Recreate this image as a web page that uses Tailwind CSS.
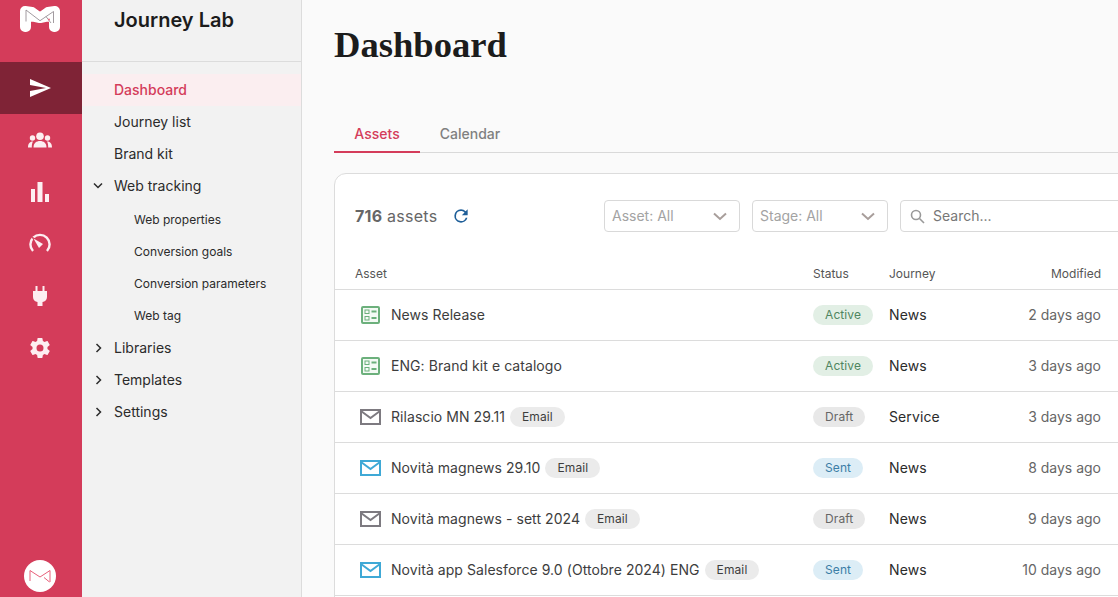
<!doctype html>
<html><head><meta charset="utf-8"><script src="https://cdn.jsdelivr.net/npm/@tailwindcss/browser@4"></script></head>
<body class="m-0 overflow-hidden">
<div class="flex h-[597px] w-[1118px] overflow-hidden font-['Inter',sans-serif] text-[14px] text-[#3d3d3d] bg-[#fafafa]">
  <!-- rail -->
  <aside class="w-[82px] shrink-0 bg-[#d43c5a] flex flex-col items-stretch">
    <div class="h-[62px] flex justify-center pt-[6px] pr-[2px]">
      <svg width="40" height="28" viewBox="0 0 40 28"><path d="M5 5 L12 6 L20 11.7 L28 6 L35 5 V21 H34 V9 L20 12 L6 9 V21 H5Z" fill="#fff" stroke="#fff" stroke-width="10" stroke-linejoin="round"/><path d="M6 15.5 V4 L20 14.7 L33.5 5.5 V17 M26 10.5 L31 17" fill="none" stroke="#8a8288" stroke-width=".8"/><circle cx="29" cy="13.5" r=".9" fill="#e8607a"/></svg>
    </div>
    <div class="h-[52px] bg-[#7f2336] flex items-center justify-center pr-[2px]">
      <svg width="24" height="20" viewBox="0 0 24 20"><path d="M2 1 L23 10 L2 19 V13 L18 10 L2 7Z" fill="#fff"/></svg>
    </div>
    <div class="h-[52px] flex items-center justify-center pr-[2px]">
      <svg width="24" height="16" viewBox="0 0 24 16" fill="#fdeef1"><circle cx="12" cy="4.2" r="3.8"/><circle cx="4.5" cy="6" r="2.7"/><circle cx="19.5" cy="6" r="2.7"/><path d="M5.5 15.5 C5.5 11 8.5 9 12 9 S18.5 11 18.5 15.5Z"/><path d="M0 15.5 C0 12 1.5 9.5 5 9.5 C4 11 3.8 13 3.8 15.5Z"/><path d="M24 15.5 C24 12 22.5 9.5 19 9.5 C20 11 20.2 13 20.2 15.5Z"/></svg>
    </div>
    <div class="h-[52px] flex items-center justify-center pr-[2px]">
      <svg width="18" height="20" viewBox="0 0 18 20" fill="#fdeef1"><rect x="0" y="7" width="4" height="13"/><rect x="6.5" y="0" width="5" height="20"/><rect x="14" y="12" width="4" height="8"/></svg>
    </div>
    <div class="h-[52px] flex items-center justify-center pr-[2px]">
      <svg width="22" height="22" viewBox="0 0 22 22" fill="none"><path d="M4 18 A9.6 9.6 0 1 1 18 18" stroke="#fdeef1" stroke-width="2.4"/><path d="M2 3 L16 11 L10 17Z" fill="#d43c5a"/><path d="M4.5 5.5 L14 11 L10 15Z" fill="#fdeef1"/></svg>
    </div>
    <div class="h-[52px] flex items-center justify-center pr-[2px]">
      <svg width="14" height="20" viewBox="0 0 14 20" fill="#fdeef1"><rect x="2.5" y="0" width="2" height="6"/><rect x="9.5" y="0" width="2" height="6"/><path d="M0 5 H14 V11 C14 14 12 15.5 9.5 16 V20 H4.5 V16 C2 15.5 0 14 0 11Z"/></svg>
    </div>
    <div class="h-[52px] flex items-center justify-center pr-[2px]">
      <svg width="24" height="24" viewBox="0 0 24 24" fill="#fdeef1"><path d="M19.43 12.98c.04-.32.07-.64.07-.98s-.03-.66-.07-.98l2.11-1.65c.19-.15.24-.42.12-.64l-2-3.46c-.12-.22-.39-.3-.61-.22l-2.49 1c-.52-.4-1.08-.73-1.69-.98l-.38-2.65A.49.49 0 0 0 14 2h-4c-.25 0-.46.18-.49.42l-.38 2.65c-.61.25-1.17.59-1.69.98l-2.49-1c-.23-.09-.49 0-.61.22l-2 3.46c-.13.22-.07.49.12.64l2.11 1.65c-.04.32-.07.65-.07.98s.03.66.07.98l-2.11 1.65c-.19.15-.24.42-.12.64l2 3.46c.12.22.39.3.61.22l2.49-1c.52.4 1.08.73 1.69.98l.38 2.65c.03.24.24.42.49.42h4c.25 0 .46-.18.49-.42l.38-2.65c.61-.25 1.17-.59 1.69-.98l2.49 1c.23.09.49 0 .61-.22l2-3.46c.12-.22.07-.49-.12-.64l-2.11-1.65zM12 15.5a3.5 3.5 0 1 1 0-7 3.5 3.5 0 0 1 0 7z"/></svg>
    </div>
    <div class="mt-auto flex justify-center pb-[5px] pr-[2px]">
      <div class="w-[32px] h-[32px] rounded-full bg-white flex items-center justify-center">
        <svg width="22" height="15" viewBox="0 0 22 15" fill="none" stroke="#e8607a" stroke-width="1"><path d="M1 12 V1.5 L11 8 L21 1.5 V13 M15 8.5 L20.5 13"/></svg>
      </div>
    </div>
  </aside>
  <!-- sidebar -->
  <nav class="w-[220px] shrink-0 bg-[#f2f2f2] border-r border-[#dcdcdc] text-[#2b2b2b]">
    <div class="h-[62px] border-b border-[#dcdcdc] pl-[32px] pt-[6px] text-[20px] leading-[28px] font-semibold text-[#1c1c1c]">Journey Lab</div>
    <div class="pt-[12px]">
      <div class="h-[32px] pl-[32px] pb-[2px] flex items-center bg-[#fbeef0] text-[#d43c5a] font-medium">Dashboard</div>
      <div class="h-[32px] pl-[32px] pb-[2px] flex items-center">Journey list</div>
      <div class="h-[32px] pl-[32px] pb-[2px] flex items-center">Brand kit</div>
      <div class="h-[32px] flex items-center relative pl-[32px] pb-[2px]"><svg class="absolute left-[11px] top-[12px]" width="10" height="8" viewBox="0 0 10 8" fill="none" stroke="#2b2b2b" stroke-width="1.5"><path d="M1 1.5 L5 5.5 L9 1.5"/></svg>Web tracking</div>
      <div class="mt-[2px] h-[32px] pl-[52px] flex items-center text-[12px]">Web properties</div>
      <div class="h-[32px] pl-[52px] flex items-center text-[12px]">Conversion goals</div>
      <div class="h-[32px] pl-[52px] flex items-center text-[12px]">Conversion parameters</div>
      <div class="h-[32px] pl-[52px] flex items-center text-[12px]">Web tag</div>
      <div class="h-[32px] flex items-center relative pl-[32px] pb-[2px]"><svg class="absolute left-[13px] top-[11px]" width="8" height="10" viewBox="0 0 8 10" fill="none" stroke="#2b2b2b" stroke-width="1.5"><path d="M1.5 1 L5.5 5 L1.5 9"/></svg>Libraries</div>
      <div class="h-[32px] flex items-center relative pl-[32px] pb-[2px]"><svg class="absolute left-[13px] top-[11px]" width="8" height="10" viewBox="0 0 8 10" fill="none" stroke="#2b2b2b" stroke-width="1.5"><path d="M1.5 1 L5.5 5 L1.5 9"/></svg>Templates</div>
      <div class="h-[32px] flex items-center relative pl-[32px] pb-[2px]"><svg class="absolute left-[13px] top-[11px]" width="8" height="10" viewBox="0 0 8 10" fill="none" stroke="#2b2b2b" stroke-width="1.5"><path d="M1.5 1 L5.5 5 L1.5 9"/></svg>Settings</div>
    </div>
  </nav>
  <!-- main -->
  <main class="w-[816px] shrink-0 pl-[32px] pt-[24px]">
    <h1 class="font-['Liberation_Serif',serif] font-bold text-[36.6px] leading-[42px] text-[#1c1c1c] h-[42px]">Dashboard</h1>
    <div class="mt-[51px] h-[36px] border-b border-[#d9d9d9] flex text-[14px] font-medium">
      <div class="w-[86px] h-[36px] border-b-2 border-[#d43c5a] text-[#d43c5a] flex items-center justify-center pb-[1px]">Assets</div>
      <div class="w-[100px] h-[36px] text-[#808080] flex items-center justify-center pb-[3px]">Calendar</div>
    </div>
    <section class="mt-[20px] w-[800px] h-[440px] bg-white border border-[#dcdcdc] rounded-[12px] pl-[20px] pr-[20px]">
      <div class="h-[85px] flex items-center pb-[1px] relative">
        <span class="text-[16px] text-[#666] tracking-[0.25px]"><b class="font-bold">716</b> assets</span>
        <svg class="ml-[14px]" width="20" height="20" viewBox="0 0 24 24" fill="#1f5f99"><path d="M17.65 6.35A7.96 7.96 0 0 0 12 4a8 8 0 1 0 7.75 10h-2.08A6 6 0 1 1 12 6c1.66 0 3.14.69 4.22 1.78L13 11h7V4l-2.35 2.35z"/></svg>
        <div class="absolute left-[249px] top-[26px] w-[136px] h-[32px] border border-[#d9d9d9] rounded-[4px] flex items-center justify-between pl-[7px] pr-[12px] text-[#a3a3a3]"><span class="pb-[2px]">Asset: All</span><svg width="14" height="9" viewBox="0 0 14 9" fill="none" stroke="#a89e9b" stroke-width="2"><path d="M1 1.5 L7 7 L13 1.5"/></svg></div>
        <div class="absolute left-[397px] top-[26px] w-[136px] h-[32px] border border-[#d9d9d9] rounded-[4px] flex items-center justify-between pl-[7px] pr-[12px] text-[#a3a3a3]"><span class="pb-[2px]">Stage: All</span><svg width="14" height="9" viewBox="0 0 14 9" fill="none" stroke="#a89e9b" stroke-width="2"><path d="M1 1.5 L7 7 L13 1.5"/></svg></div>
        <div class="absolute left-[545px] top-[26px] w-[240px] h-[32px] border border-[#d9d9d9] rounded-[4px] flex items-center pl-[9px] gap-[8px] text-[#777]"><svg width="15" height="15" viewBox="0 0 15 15" fill="none" stroke="#999" stroke-width="1.6"><circle cx="6" cy="6" r="4.5"/><path d="M9.5 9.5 L14 14"/></svg><span class="pb-[2px]">Search...</span></div>
      </div>
      <div class="-mx-[20px] text-[14px]">
        <div class="h-[31px] grid grid-cols-[458px_76px_1fr_120px] items-center pl-[20px] pr-[32px] text-[12px] text-[#555] border-b border-[#dcdcdc]"><span>Asset</span><span>Status</span><span>Journey</span><span class="text-right">Modified</span></div>

        <div class="h-[51px] grid grid-cols-[458px_76px_1fr_120px] items-center pl-[20px] pr-[32px] border-b border-[#dcdcdc]">
          <div class="flex items-center"><svg class="ml-[6px] mr-[11px]" width="19" height="18" viewBox="0 0 19 18" fill="none"><rect x="1" y="1" width="17" height="16" rx="1" stroke="#6cb07c" stroke-width="2" fill="#f4faf5"/><rect x="4" y="4" width="4" height="3.5" stroke="#6cb07c"/><rect x="4" y="10.5" width="4" height="3.5" stroke="#6cb07c"/><path d="M10.5 5.5h5M10.5 12h5" stroke="#6cb07c" stroke-width="2"/></svg><span class="pb-[2px] tracking-[0.06px]">News Release</span></div>
          <div class="flex"><span class="flex h-[20px] items-center px-[12px] rounded-full bg-[#e2efe5] text-[#4f8560] text-[12px] tracking-[0.1px]">Active</span></div><span class="pb-[2px] text-[#2b2b2b] tracking-[0.1px]">News</span><span class="pb-[2px] text-right text-[#666]">2 days ago</span>
        </div>
        <div class="h-[51px] grid grid-cols-[458px_76px_1fr_120px] items-center pl-[20px] pr-[32px] border-b border-[#dcdcdc]">
          <div class="flex items-center"><svg class="ml-[6px] mr-[11px]" width="19" height="18" viewBox="0 0 19 18" fill="none"><rect x="1" y="1" width="17" height="16" rx="1" stroke="#6cb07c" stroke-width="2" fill="#f4faf5"/><rect x="4" y="4" width="4" height="3.5" stroke="#6cb07c"/><rect x="4" y="10.5" width="4" height="3.5" stroke="#6cb07c"/><path d="M10.5 5.5h5M10.5 12h5" stroke="#6cb07c" stroke-width="2"/></svg><span class="pb-[2px] tracking-[0.06px]">ENG: Brand kit e catalogo</span></div>
          <div class="flex"><span class="flex h-[20px] items-center px-[12px] rounded-full bg-[#e2efe5] text-[#4f8560] text-[12px] tracking-[0.1px]">Active</span></div><span class="pb-[2px] text-[#2b2b2b] tracking-[0.1px]">News</span><span class="pb-[2px] text-right text-[#666]">3 days ago</span>
        </div>
        <div class="h-[51px] grid grid-cols-[458px_76px_1fr_120px] items-center pl-[20px] pr-[32px] border-b border-[#dcdcdc]">
          <div class="flex items-center"><svg class="ml-[5px] mr-[10px]" width="21" height="16" viewBox="0 0 21 16" fill="none" stroke="#7d7a80" stroke-width="2"><rect x="1" y="1" width="19" height="14"/><path d="M1 2 L10.5 9 L20 2"/></svg><span class="pb-[2px] tracking-[0.06px]">Rilascio MN 29.11</span><span class="ml-[5px] flex h-[20px] items-center px-[12px] rounded-full bg-[#ebebeb] text-[#3d3d3d] text-[12px] tracking-[0.1px]">Email</span></div>
          <div class="flex"><span class="flex h-[20px] items-center px-[12px] rounded-full bg-[#e8e8e8] text-[#666] text-[12px] tracking-[0.1px]">Draft</span></div><span class="pb-[2px] text-[#2b2b2b] tracking-[0.1px]">Service</span><span class="pb-[2px] text-right text-[#666]">3 days ago</span>
        </div>
        <div class="h-[51px] grid grid-cols-[458px_76px_1fr_120px] items-center pl-[20px] pr-[32px] border-b border-[#dcdcdc]">
          <div class="flex items-center"><svg class="ml-[5px] mr-[10px]" width="21" height="16" viewBox="0 0 21 16" fill="none" stroke="#3fa9d6" stroke-width="2"><rect x="1" y="1" width="19" height="14"/><path d="M1 2 L10.5 9 L20 2"/></svg><span class="pb-[2px] tracking-[0.06px]">Novità magnews 29.10</span><span class="ml-[5px] flex h-[20px] items-center px-[12px] rounded-full bg-[#ebebeb] text-[#3d3d3d] text-[12px] tracking-[0.1px]">Email</span></div>
          <div class="flex"><span class="flex h-[20px] items-center px-[12px] rounded-full bg-[#dcedf6] text-[#3b7ea6] text-[12px] tracking-[0.1px]">Sent</span></div><span class="pb-[2px] text-[#2b2b2b] tracking-[0.1px]">News</span><span class="pb-[2px] text-right text-[#666]">8 days ago</span>
        </div>
        <div class="h-[51px] grid grid-cols-[458px_76px_1fr_120px] items-center pl-[20px] pr-[32px] border-b border-[#dcdcdc]">
          <div class="flex items-center"><svg class="ml-[5px] mr-[10px]" width="21" height="16" viewBox="0 0 21 16" fill="none" stroke="#7d7a80" stroke-width="2"><rect x="1" y="1" width="19" height="14"/><path d="M1 2 L10.5 9 L20 2"/></svg><span class="pb-[2px] tracking-[0.06px]">Novità magnews - sett 2024</span><span class="ml-[5px] flex h-[20px] items-center px-[12px] rounded-full bg-[#ebebeb] text-[#3d3d3d] text-[12px] tracking-[0.1px]">Email</span></div>
          <div class="flex"><span class="flex h-[20px] items-center px-[12px] rounded-full bg-[#e8e8e8] text-[#666] text-[12px] tracking-[0.1px]">Draft</span></div><span class="pb-[2px] text-[#2b2b2b] tracking-[0.1px]">News</span><span class="pb-[2px] text-right text-[#666]">9 days ago</span>
        </div>
        <div class="h-[51px] grid grid-cols-[458px_76px_1fr_120px] items-center pl-[20px] pr-[32px] border-b border-[#dcdcdc]">
          <div class="flex items-center"><svg class="ml-[5px] mr-[10px]" width="21" height="16" viewBox="0 0 21 16" fill="none" stroke="#3fa9d6" stroke-width="2"><rect x="1" y="1" width="19" height="14"/><path d="M1 2 L10.5 9 L20 2"/></svg><span class="pb-[2px] tracking-[0.06px]">Novità app Salesforce 9.0 (Ottobre 2024) ENG</span><span class="ml-[5px] flex h-[20px] items-center px-[12px] rounded-full bg-[#ebebeb] text-[#3d3d3d] text-[12px] tracking-[0.1px]">Email</span></div>
          <div class="flex"><span class="flex h-[20px] items-center px-[12px] rounded-full bg-[#dcedf6] text-[#3b7ea6] text-[12px] tracking-[0.1px]">Sent</span></div><span class="pb-[2px] text-[#2b2b2b] tracking-[0.1px]">News</span><span class="pb-[2px] text-right text-[#666]">10 days ago</span>
        </div>
      </div>
    </section>
  </main>
</div>
</body></html>
